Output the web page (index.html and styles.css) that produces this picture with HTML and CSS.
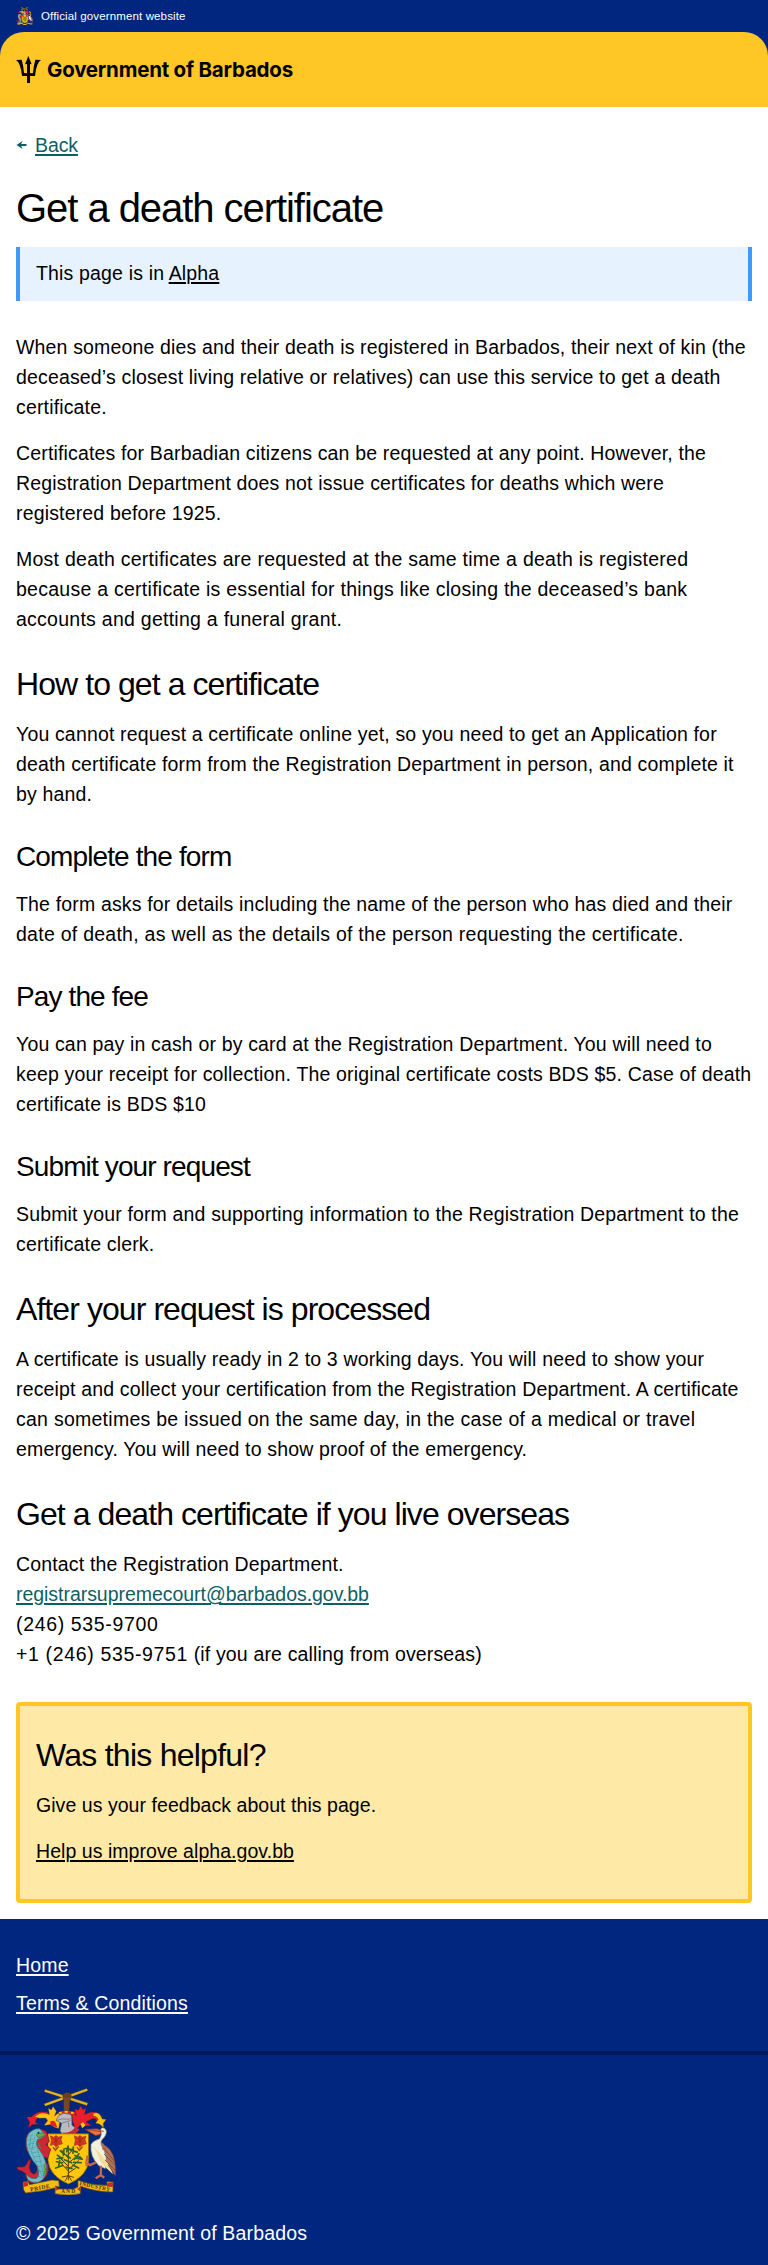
FILE: index.html
```html
<!DOCTYPE html>
<html lang="en">
<head>
<meta charset="utf-8">
<title>Get a death certificate</title>
<link rel="stylesheet" href="styles.css">
</head>
<body>
<svg class="defs" width="0" height="0" aria-hidden="true">
  <symbol id="crest" viewBox="48 81 300 325">
    <!-- arm with crossed sugar cane -->
    <path d="M134 92 262 133M134 135 262 89" stroke="#7d6420" stroke-width="9"/>
    <path d="M134 92 262 133M134 135 262 89" stroke="#e6b422" stroke-width="6"/>
    <path d="M191 158 190 120 188 104Q192 98 200 98L211 99 214 108 210 122 208 158Z" fill="#754726" stroke="#3b2413" stroke-width="1.5"/>
    <path d="M193 104h17M192 109h18" stroke="#3b2413"/>
    <!-- mantling -->
    <path d="M98 194 84 204 89 188 80 171 94 171Q112 151 141 157L150 165 127 166Q106 173 106 188L116 192Z" fill="#e81e2b" stroke="#6d1b10"/>
    <path d="M104 171Q122 152 148 164L145 145 154 150 159 140 169 154 163 168 177 158 181 171 171 177 179 188 176 206 164 202 151 194 132 197 143 182 137 174 119 175Z" fill="#ffc20e" stroke="#6b4a00"/>
    <path d="M151 184Q165 180 167 190L172 203 151 196Z" fill="#e81e2b"/>
    <path d="M215 155 229 167 224 147 235 151 242 138 249 149 258 145 254 164 271 157Q300 153 306 179L292 191Q291 171 276 177L258 186 275 197 258 198 246 187 235 203 226 207 218 184Z" fill="#e81e2b" stroke="#6d1b10"/>
    <path d="M280 160Q299 153 307 177L319 179 310 190 311 204 299 192 287 190 295 179Q292 169 280 168Z" fill="#ffc20e" stroke="#6b4a00"/>
    <path d="M241 192 249 186 257 196 247 205Z" fill="#ffc20e"/>
    <path d="M173 160 181 153 220 153 228 160 222 166H180Z" fill="#c92c27"/>
    <path d="M177 159h8m9-3h9m10 3h8" stroke="#ffc20e" stroke-width="5"/>
    <path d="M168 181 176 167 191 160 210 163 215 168 216 196 230 207 223 220 188 226 180 213 185 190Z" fill="#b9bbc0" stroke="#5f6064" stroke-width="2"/>
    <path d="M169 182 185 177 209 178 214 173M185 190 211 182M205 187 207 202" fill="none" stroke="#65666b" stroke-width="2"/>
    <path d="M184 218Q210 222 226 202L239 208Q229 226 205 229Z" fill="#c62b32"/>
    <!-- shield -->
    <path d="M143 222H266V302Q263 348 205 373 148 348 144 302Z" fill="#ffc70a" stroke="#826000" stroke-width="2"/>
    <g id="flower">
      <path d="M151 228 161 232 168 227 175 232 186 229 183 240 187 252 177 255 168 260 160 254 151 257 154 241Z" fill="#dd3429" stroke="#8a2310" stroke-width="1.5"/>
      <path d="M160 235 178 251M177 235 159 251M168 231V268" stroke="#7c2c0c" stroke-width="2"/>
      <path d="M159 262 166 272 176 260" fill="none" stroke="#a9441b" stroke-width="4"/>
    </g>
    <use href="#flower" x="72"/>
    <path d="M205 260V350M205 334 178 305M205 320 174 288M205 330 237 302M205 310 237 284M205 295 184 270M205 285 221 266M205 340 227 325" fill="none" stroke="#4b3714" stroke-width="3"/>
    <path d="M205 348 185 352M205 346 195 365M205 346 215 364M205 348 222 353M205 350V362" stroke="#442c10" stroke-width="2.5"/>
    <path d="M204 259 200 276M196 266 216 269M181 273 193 284M192 268 190 286M220 262 219 280M211 271 232 277M172 286 187 297M171 297 188 293M237 282 223 299M225 287 243 293M169 306 188 309M179 302 176 319M188 317 167 325M231 296 247 298M221 308 244 309M218 316 236 325M199 286 211 295M193 300 215 309M198 323 216 326" stroke="#286827" stroke-width="5" stroke-linecap="round"/>
    <!-- dolphin -->
    <path d="M118 210Q139 205 144 230L148 245 138 254 152 268 143 296 119 287 144 315Q151 350 119 367L94 370Q78 368 76 341L65 334Q51 333 50 322L72 321Q82 315 83 304L92 298 88 322Q90 342 103 343 119 332 104 304L80 272Q69 234 89 215Z" fill="#cf2636" stroke="#6d1723" stroke-width="2"/>
    <path d="M86 221Q101 204 119 207L129 218 137 225 121 236 113 238Q103 250 118 270 144 305 138 340 128 373 99 368 78 363 80 344 90 359 108 356 122 350 111 319 82 285 79 253Q77 233 86 221Z" fill="#73bdc6" stroke="#276c78" stroke-width="2"/>
    <path d="M89 229 99 225M83 242 97 238M83 254 99 250M87 267 106 263M93 280 115 276M100 292 122 289M106 306 130 304M110 320 135 319M112 334 135 335M105 348 126 353M93 230 87 265M104 232 94 276 126 349M109 253 130 342" fill="none" stroke="#347f8a" stroke-width="1.7" stroke-dasharray="4 2"/>
    <path d="M111 222 129 219 135 225 116 234 109 227ZM114 250 122 266 116 258M132 312 137 332 128 351" fill="#66ac49" stroke="#448b39" stroke-width="3"/>
    <circle cx="115" cy="219" r="3" fill="#302323"/>
    <!-- pelican -->
    <path d="M286 248Q302 239 315 257 350 275 347 348L326 325 307 303Z" fill="#b57158" stroke="#714331" stroke-width="2"/>
    <path d="M303 215Q300 200 314 205 326 214 313 233 299 243 305 258 327 293 316 327L297 318Q269 291 273 254 280 242 299 237L304 224Z" fill="#f5f0dd" stroke="#777366" stroke-width="2"/>
    <path d="M276 256 291 277 300 303 314 320 340 344 323 307 298 278Z" fill="#f2dd9a"/>
    <path d="M255 208 292 207 304 212 301 224 287 227Z" fill="#e87443" stroke="#873722" stroke-width="2"/>
    <path d="M255 208 303 215" stroke="#852d19" stroke-width="2"/>
    <circle cx="309" cy="214" r="2" fill="#222"/>
    <path d="M307 268Q315 259 319 278M313 283 345 316M321 275 344 306M316 301 346 332M325 315 345 345" fill="none" stroke="#775244" stroke-width="3"/>
    <path d="M288 308 270 316 259 310 263 287M266 310 258 319M303 318 303 346 287 356M303 346 313 354" fill="none" stroke="#cb6748" stroke-width="7"/>
    <!-- motto ribbon -->
    <path d="M69 367 84 365 88 375 156 361 176 363 178 382 166 379 172 388 221 388 234 382 234 362Q281 378 323 377L321 366 340 367 339 397Q295 398 242 380L241 402Q205 410 165 402L166 384Q127 395 76 400L70 389Z" fill="#f2bb17" stroke="#765310" stroke-width="2"/>
    <path d="M70 368 83 367 84 378 70 382ZM324 369 340 368 339 382 321 381ZM167 380 177 389 167 393ZM242 380 232 389 241 395Z" fill="#c92b28"/>
  </symbol>
</svg>

<header>
  <div class="official">
    <svg class="official-crest" aria-hidden="true"><use href="#crest"/></svg>
    <span>Official government website</span>
  </div>
  <div class="masthead-wrap">
    <div class="masthead">
      <svg class="trident" viewBox="0 0 75 81" aria-hidden="true">
        <path d="M0 12 17 11Q23 31 24 51L33 52V24L27 25 37 0 47 25 42 24V52L51 51Q52 31 58 11L75 12Q61 20 57 60H42V81H33V60H18Q14 20 0 12Z"/>
      </svg>
      <span class="brand">Government of Barbados</span>
    </div>
  </div>
</header>

<main class="main">
  <nav class="back">
    <svg class="arrow" viewBox="0 0 30 24" aria-hidden="true"><path d="M0 12 18 0 14 9H30V15H14L18 24Z"/></svg>
    <a href="#">Back</a>
  </nav>
  <h1>Get a death certificate</h1>
  <div class="alert">This page is in <a href="#">Alpha</a></div>

  <p>When someone dies and their death is registered in Barbados, their next of kin (the<br>deceased’s closest living relative or relatives) can use this service to get a death<br>certificate.</p>
  <p>Certificates for Barbadian citizens can be requested at any point. However, the<br>Registration Department does not issue certificates for deaths which were<br>registered before 1925.</p>
  <p class="loose">Most death certificates are requested at the same time a death is registered<br>because a certificate is essential for things like closing the deceased’s bank<br>accounts and getting a funeral grant.</p>

  <h2>How to get a certificate</h2>
  <p>You cannot request a certificate online yet, so you need to get an Application for<br>death certificate form from the Registration Department in person, and complete it<br>by hand.</p>

  <h3>Complete the form</h3>
  <p>The form asks for details including the name of the person who has died and their<br><span class="loose">date of death, as well as the details of the person requesting the certificate.</span></p>

  <h3>Pay the fee</h3>
  <p>You can pay in cash or by card at the Registration Department. You will need to<br>keep your receipt for collection. The original certificate costs BDS $5. Case of death<br>certificate is BDS $10</p>

  <h3>Submit your request</h3>
  <p>Submit your form and supporting information to the Registration Department to the<br>certificate clerk.</p>

  <h2>After your request is processed</h2>
  <p>A certificate is usually ready in 2 to 3 working days. You will need to show your<br>receipt and collect your certification from the Registration Department. A certificate<br><span class="loose">can sometimes be issued on the same day, in the case of a medical or travel</span><br>emergency. You will need to show proof of the emergency.</p>

  <h2>Get a death certificate if you live overseas</h2>
  <p>Contact the Registration Department.<br><a class="email" href="#">registrarsupremecourt@barbados.gov.bb</a><br><span class="phone">(246) 535-9700</span><br><span class="phone">+1 (246) 535-9751</span> (if you are calling from overseas)</p>

  <section class="feedback">
    <h2>Was this helpful?</h2>
    <p>Give us your feedback about this page.</p>
    <p><a href="#">Help us improve alpha.gov.bb</a></p>
  </section>
</main>

<footer>
  <nav class="footer-links">
    <a href="#">Home</a>
    <a href="#">Terms &amp; Conditions</a>
  </nav>
  <div class="footer-base">
    <svg class="footer-crest" viewBox="48 81 300 325" aria-hidden="true">
      <use href="#crest" x="48" y="81" width="300" height="325"/>
      <g class="crest-motto">
        <text transform="translate(91 395) rotate(-10)" textLength="60">PRIDE</text>
        <text x="183" y="401" textLength="43">AND</text>
        <text transform="translate(238 376) rotate(12)" textLength="94">INDUSTRY</text>
      </g>
    </svg>
    <div class="copyright">© 2025 Government of Barbados</div>
  </div>
</footer>
</body>
</html>
```
FILE: styles.css
```css
* { box-sizing: border-box; }

body {
  margin: 0;
  background: #fff;
  color: #000;
  font: 19.5px/30px "Liberation Sans", Arial, sans-serif;
  letter-spacing: 0.16px;
  white-space: nowrap;
}

h1, h2, h3, p { margin: 0; font-weight: 400; }

a {
  color: inherit;
  text-decoration: underline;
  text-decoration-thickness: 2px;
  text-underline-offset: 2px;
}

.defs { position: absolute; }

.crest-motto {
  font: 700 17px "Liberation Serif", serif;
  fill: #4a3408;
  letter-spacing: 0;
}

.official {
  display: flex;
  align-items: center;
  gap: 8px;
  height: 32px;
  padding: 0 16px;
  background: #00267f;
  color: #fff;
  font-size: 11.5px;
  line-height: 16px;
  letter-spacing: 0.13px;
}

.official-crest { width: 17px; height: 18px; }

.masthead-wrap { background: #00267f; }

.masthead {
  display: flex;
  align-items: center;
  gap: 6px;
  height: 75px;
  padding: 0 16px;
  border-radius: 24px 24px 0 0;
  background: #ffc726;
}

.trident { width: 25px; height: 27px; }

.brand {
  font: 700 20.5px/28px Inter, sans-serif;
  letter-spacing: -0.22px;
}

.main { padding: 23px 16px 16px; }

.back {
  display: flex;
  align-items: center;
  gap: 8px;
  color: #0e5f64;
  letter-spacing: -0.1px;
}

.arrow { width: 11px; height: 8px; fill: currentColor; }

h1 {
  margin: 23px 0 14px;
  font-size: 40px;
  line-height: 50px;
  letter-spacing: -1.05px;
}

.alert {
  margin-bottom: 31px;
  padding: 11px 16px 13px;
  border: solid #3f9af7;
  border-width: 0 4px;
  background: #e6f3ff;
}

p + p { margin-top: 16px; }

.loose { letter-spacing: 0.26px; }

h2 {
  margin: 30px 0 15px;
  font-size: 32px;
  line-height: 40px;
  letter-spacing: -0.93px;
}

h3 {
  margin: 30px 0 14px;
  font-size: 28px;
  line-height: 36px;
  letter-spacing: -0.88px;
}

.email { color: #0e5f64; letter-spacing: -0.04px; }

.phone { letter-spacing: 0.65px; }

.feedback {
  margin-top: 33px;
  padding: 29px 16px 33px;
  border: 4px solid #ffc726;
  border-radius: 4px;
  background: #ffe9a6;
}

.feedback h2 { margin-top: 0; letter-spacing: -0.75px; }

.feedback p { letter-spacing: 0.05px; }

footer { background: #00267f; color: #fff; }

.footer-links {
  display: flex;
  flex-direction: column;
  align-items: flex-start;
  gap: 8px;
  padding: 31px 16px 33px;
  border-bottom: 4px solid #001a59;
}

.footer-base { padding: 32px 16px 17px; }

.footer-crest { display: block; width: 100px; height: 108px; margin-bottom: 23px; }
```
